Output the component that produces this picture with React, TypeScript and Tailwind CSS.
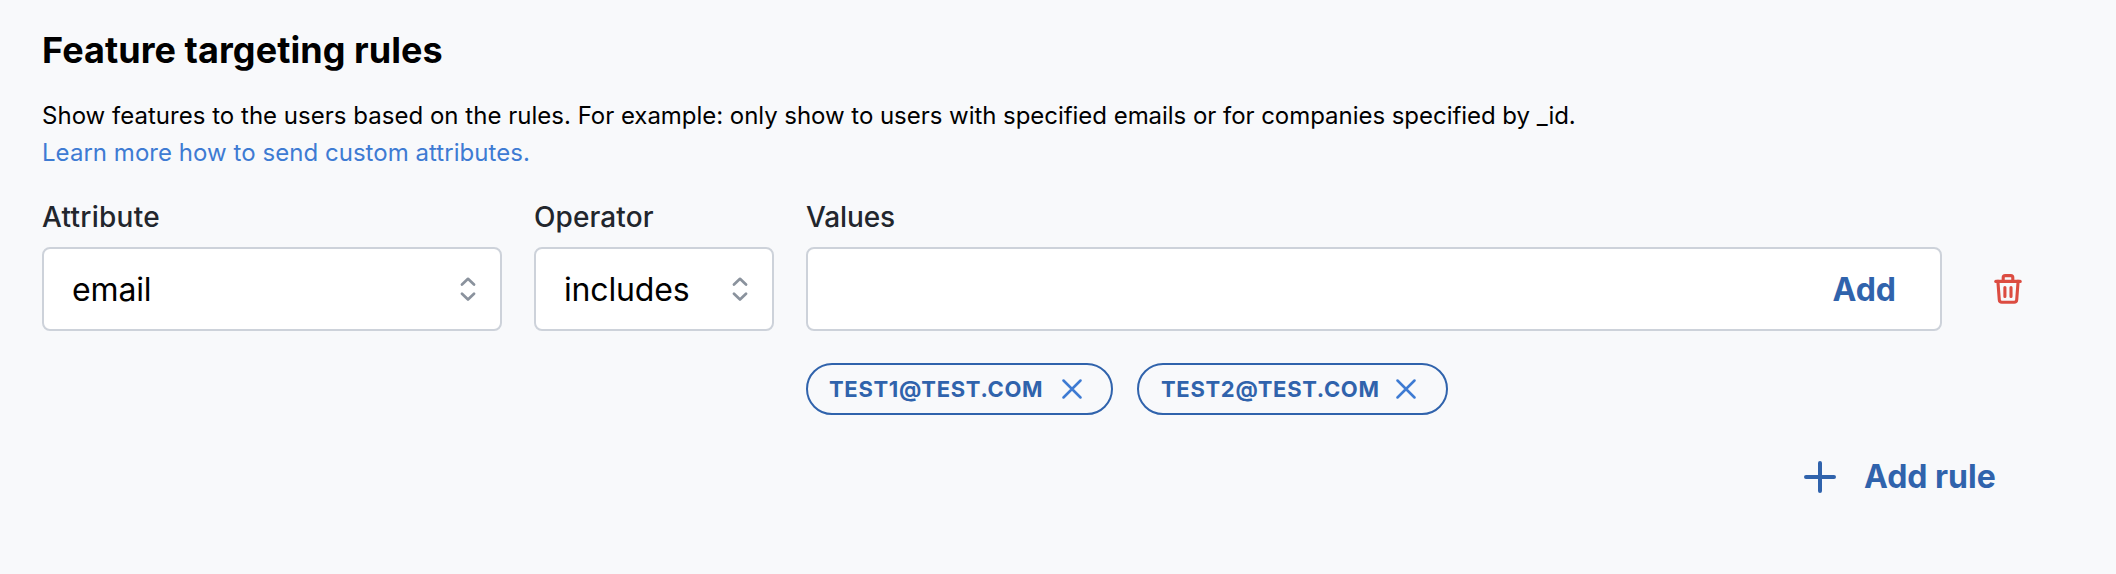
import type { ReactNode } from "react";

function SelectorIcon() {
  return (
    <svg width="16" height="24" viewBox="0 0 16 24" fill="none" stroke="#8a929d" strokeWidth="2.7" strokeLinecap="round" strokeLinejoin="round">
      <path d="M2 7.5 8 1.8l6 5.7" />
      <path d="m2 16.8 6 5.7 6-5.7" />
    </svg>
  );
}

function TrashIcon() {
  return (
    <svg width="28" height="30" viewBox="0 0 28 30" fill="none" stroke="#dc4c41" strokeWidth="3.1" strokeLinecap="round" strokeLinejoin="round">
      <path d="M1.8 7.4h24.4" />
      <path d="M9.2 7.4V3.6a2 2 0 0 1 2-2h5.6a2 2 0 0 1 2 2v3.8" />
      <path d="M3.9 7.4 5.3 25.9a2.6 2.6 0 0 0 2.6 2.4h12.2a2.6 2.6 0 0 0 2.6-2.4l1.4-18.5" />
      <path d="M10.9 13.5v9M17 13.5v9" />
    </svg>
  );
}

function Field({ label, className, labelClassName, children }: { label: string; className: string; labelClassName: string; children: ReactNode }) {
  return (
    <div className={className}>
      <div className={`h-10 text-[28px] leading-10 font-medium text-[#22262d] ${labelClassName}`}>{label}</div>
      {children}
    </div>
  );
}

function Select({ value }: { value: string }) {
  return (
    <button className="mt-[10px] flex h-[84px] w-full items-center justify-between rounded-lg border-2 border-[#cdd2da] bg-white pr-6 pl-7 text-[32px] leading-10 tracking-[-0.15px] text-black">
      <span className="pt-0.5">{value}</span>
      <SelectorIcon />
    </button>
  );
}

function Chip({ text, className }: { text: string; className: string }) {
  return (
    <div className={`flex h-[52px] items-center justify-between rounded-full border-2 border-[#3063ac] ${className}`}>
      <span className="text-[22px] leading-8 font-bold tracking-[0.68px] text-[#3063ac]">{text}</span>
      <svg width="20" height="20" viewBox="0 0 20 20" fill="none" stroke="#3e7bd3" strokeWidth="2.5" strokeLinecap="round">
        <path d="m1.5 1.5 17 17M18.5 1.5l-17 17" />
      </svg>
    </div>
  );
}

export default function App() {
  return (
    <main className="h-[574px] w-[2116px] bg-[#f8f9fb] px-[42px] pt-[26px] font-['Inter',sans-serif]">
      <h2 className="h-12 text-[36px] leading-[48px] font-bold tracking-[0.06px] text-black">Feature targeting rules</h2>
      <div className="mt-[23px] text-[24px] leading-[37px] text-black">
        <p>
          <span className="tracking-[0.02px]">Show features to the users based on the rules. </span>
          <span className="tracking-[-0.04px]">For example: only show to users with specified emails or for companies specified by _id.</span>
        </p>
        <a className="tracking-[0.04px] text-[#3e7bd3]">Learn more how to send custom attributes.</a>
      </div>

      <div className="mt-[26px] flex items-start">
        <Field label="Attribute" className="w-[460px]" labelClassName="tracking-[0.25px]">
          <Select value="email" />
        </Field>
        <Field label="Operator" className="ml-8 w-[240px]" labelClassName="tracking-[0.1px]">
          <Select value="includes" />
        </Field>
        <Field label="Values" className="ml-8 w-[1136px]" labelClassName="tracking-[-0.1px]">
          <div className="mt-[10px] flex h-[84px] items-center justify-end rounded-lg border-2 border-[#cdd2da] bg-white pr-11">
            <button className="pt-0.5 text-[32px] leading-10 font-bold text-[#3063ac]">Add</button>
          </div>
          <div className="mt-8 flex gap-6">
            <Chip text="TEST1@TEST.COM" className="w-[307px] pr-[29px] pl-[21px]" />
            <Chip text="TEST2@TEST.COM" className="w-[311px] pr-[30px] pl-[22px]" />
          </div>
        </Field>
        <button className="mt-[77px] ml-[52px]">
          <TrashIcon />
        </button>
      </div>

      <button className="mt-[42px] ml-auto flex w-[270px] items-center gap-7 text-[#3063ac]">
        <svg width="32" height="32" viewBox="0 0 32 32" fill="none" stroke="currentColor" strokeWidth="4" strokeLinecap="round">
          <path d="M16 2v28M2 16h28" />
        </svg>
        <span className="text-[32px] leading-10 font-bold">Add rule</span>
      </button>
    </main>
  );
}
